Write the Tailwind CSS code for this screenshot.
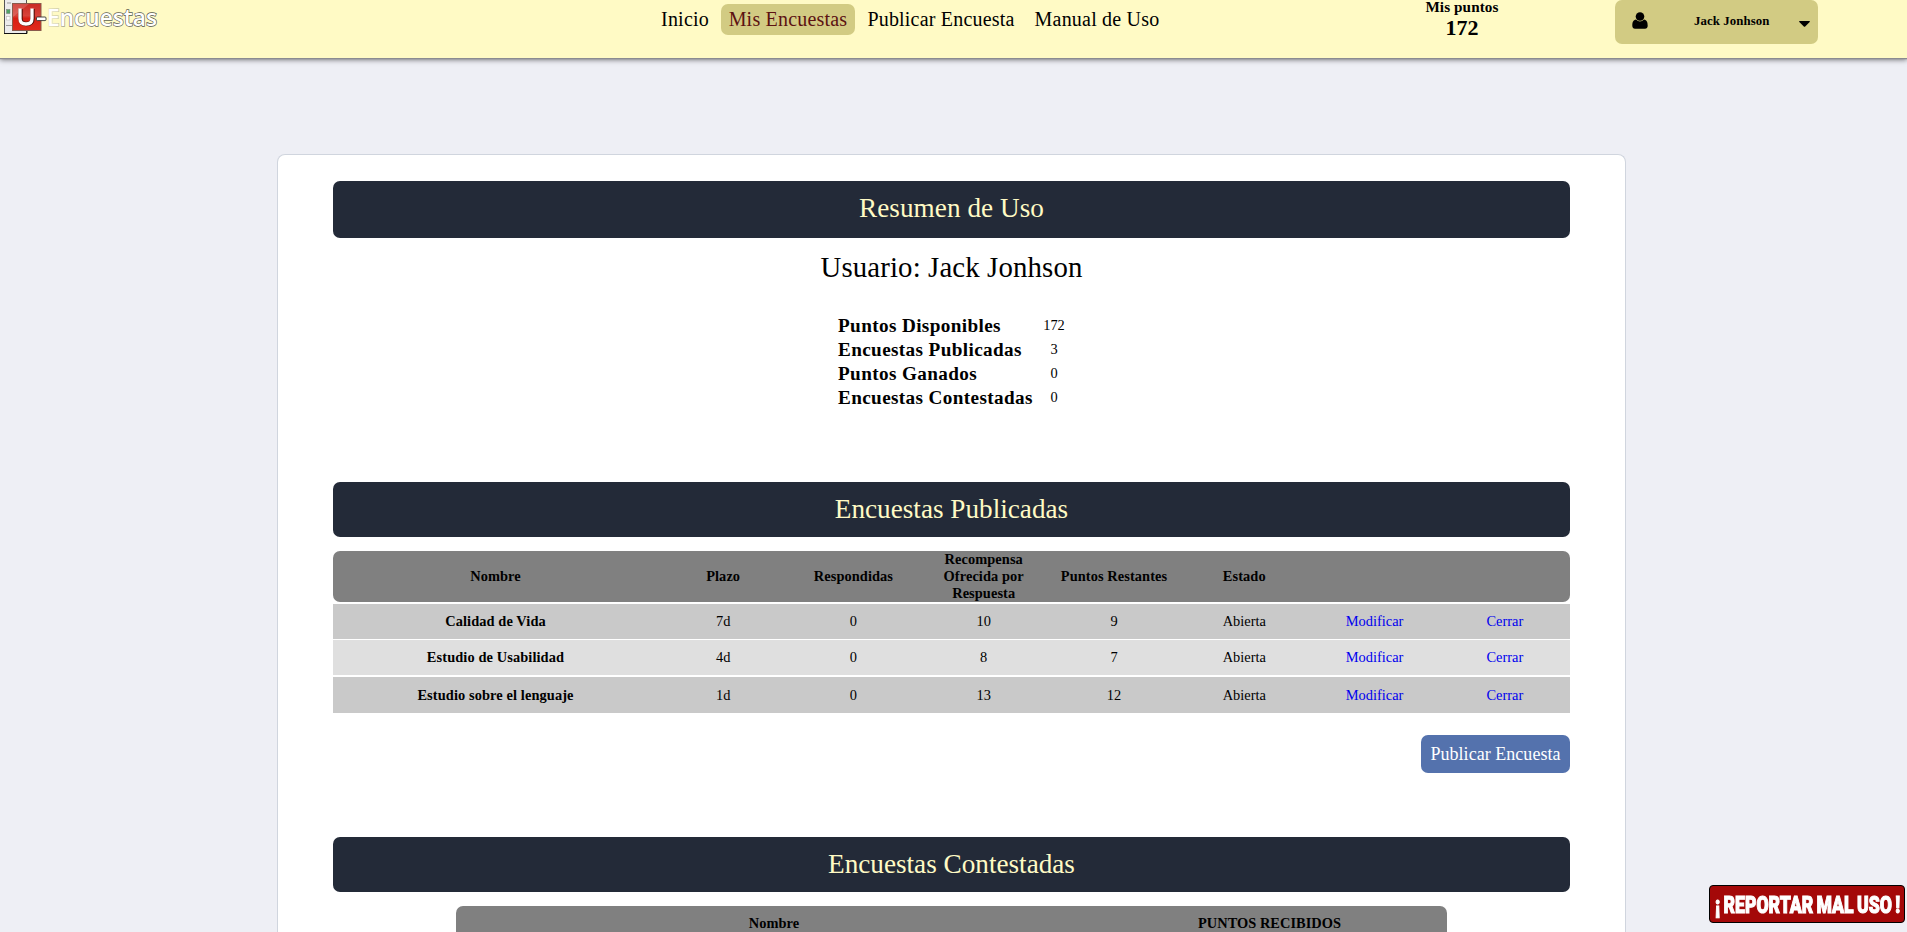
<!DOCTYPE html>
<html lang="es">
<head>
<meta charset="utf-8">
<title>U-Encuestas</title>
<script src="https://cdn.jsdelivr.net/npm/@tailwindcss/browser@4"></script>
</head>
<body class="flex h-screen flex-col overflow-hidden bg-[#eeeff5] font-['Liberation_Serif','Times_New_Roman',serif] text-black">
<header class="flex h-[58px] shrink-0 items-start bg-[#fffac5] shadow-[0_1px_1px_#8b8b90,0_2px_5px_#77777b]">
  <svg class="h-[40px] w-[170px] shrink-0" viewBox="0 0 170 40">
    <defs>
      <linearGradient id="red" x1="0" y1="0" x2="0" y2="1"><stop offset="0" stop-color="#c92a22"/><stop offset=".45" stop-color="#d7433a"/><stop offset=".55" stop-color="#d81f14"/><stop offset="1" stop-color="#e02a1c"/></linearGradient>
      <linearGradient id="edge" x1="0" y1="0" x2="1" y2="0"><stop offset="0" stop-color="#e8e4b8"/><stop offset=".1" stop-color="#d0ccaa"/><stop offset=".2" stop-color="#77776a"/><stop offset="1" stop-color="#4c4c44"/></linearGradient>
    </defs>
    <rect x="4.5" y="-2" width="22" height="35.5" fill="#ececec" stroke="#555"/>
    <path d="M4 33.5H27V30" fill="none" stroke="#111"/>
    <rect x="6.500" y="9.500" width="3.500" height="4" fill="#4fa565" stroke="#777" stroke-width=".5"/>
    <rect x="6.500" y="16.500" width="3.500" height="3.500" fill="#fff" stroke="#bbb" stroke-width=".6"/>
    <path d="M7 3h4M6 25.500h6" stroke="#999"/>
    <rect x="12.500" y="3.500" width="28.500" height="27" fill="url(#red)" stroke="#8a5a4c"/>
    <path d="M13 4H29L13 17Z" fill="#fff" opacity=".16"/>
    <path d="M20.500 9V18.500Q20.500 24 26.500 24T32.500 18.500V9" fill="none" stroke="#4a0d08" stroke-width="4.400"/>
    <path d="M20 8.500V18.500Q20 24 26 24T32 18.500V8.500" fill="none" stroke="#fff" stroke-width="3.300"/>
    <rect x="36.500" y="17" width="9.500" height="3.600" rx="1" fill="#fff" stroke="#333" stroke-width=".9"/>
    <text x="47" y="26" font-family="Open Sans" font-weight="600" font-size="24" textLength="110" lengthAdjust="spacingAndGlyphs" fill="#fff" stroke="url(#edge)" stroke-width="1.300" paint-order="stroke">Encuestas</text>
  </svg>
  <nav class="ml-[484px] flex shrink-0 pt-1 text-center text-[20px] leading-[31px] tracking-[0.2px]">
    <a class="w-[62px]">Inicio</a>
    <a class="ml-[5px] w-[134px] rounded-[7px] bg-[#d2cb83] text-[#5c1212]">Mis Encuestas</a>
    <a class="ml-1.5 w-[160px]">Publicar Encuesta</a>
    <a class="ml-1.5 w-[140px]">Manual de Uso</a>
  </nav>
  <div class="ml-[245px] w-[100px] shrink-0 text-center font-bold">
    <div class="h-[17px] text-[15.2px] leading-[14px] tracking-[0.1px]">Mis puntos</div>
    <div class="text-[22px] leading-[21px]">172</div>
  </div>
  <div class="ml-[103px] flex h-11 w-[203px] shrink-0 items-center rounded-[7px] bg-[#d2cb83] pr-2 pl-[17px]">
    <svg class="-mt-1 h-[17px] w-4" viewBox="0 0 16 17"><circle cx="8" cy="4.500" r="4.300"/><path d="M4 7.600C1.200 8 .3 10.500.3 13.700.3 15.600 1.400 16.700 3 16.700H13C14.600 16.700 15.700 15.600 15.700 13.700 15.700 10.500 14.800 8 12 7.600Q8 11.400 4 7.600Z"/></svg>
    <span class="ml-[46px] text-[12.8px] font-bold tracking-[0.1px]">Jack Jonhson</span>
    <svg class="mt-1 ml-auto h-1.5 w-[11px]" viewBox="0 0 11 6"><path d="M.6 0H10.400Q11.200.3 10.700.9L6.200 5.500Q5.500 6.100 4.800 5.500L.3.900Q-.2.300.6 0Z"/></svg>
  </div>
</header>

<main class="mt-24 ml-[277px] min-h-0 w-[1349px] flex-1 overflow-hidden rounded-t-lg border border-b-0 border-[#d0d5de] bg-white px-[55px] pt-[26px]">
  <h1 class="flex h-[57px] items-center justify-center rounded-[7px] bg-[#232a38] pb-[3px] text-[27.2px] tracking-[0.05px] text-[#fffac5]">Resumen de Uso</h1>
  <p class="mt-[11px] text-center text-[28.8px] leading-9 tracking-[0.13px]">Usuario: Jack Jonhson</p>
  <dl class="mt-[29px] grid grid-cols-[205px_22px] justify-center text-[19.2px] leading-6">
    <dt class="font-bold tracking-[0.37px]">Puntos Disponibles</dt><dd class="text-center text-[14.4px] leading-[23px]">172</dd>
    <dt class="font-bold tracking-[0.37px]">Encuestas Publicadas</dt><dd class="text-center text-[14.4px] leading-[23px]">3</dd>
    <dt class="font-bold tracking-[0.37px]">Puntos Ganados</dt><dd class="text-center text-[14.4px] leading-[23px]">0</dd>
    <dt class="font-bold tracking-[0.37px]">Encuestas Contestadas</dt><dd class="text-center text-[14.4px] leading-[23px]">0</dd>
  </dl>

  <h2 class="mt-[72px] flex h-[55px] items-center justify-center rounded-[7px] bg-[#232a38] pb-px text-[27.2px] text-[#fffac5]">Encuestas Publicadas</h2>
  <div class="mt-3.5 text-center text-[14.4px] leading-[17px]">
    <div class="grid h-[51px] grid-cols-[325px_repeat(7,1fr)] items-center rounded-[7px] bg-[#808080] font-bold tracking-[0.08px]">
      <span>Nombre</span><span>Plazo</span><span>Respondidas</span><span class="px-5">Recompensa Ofrecida por Respuesta</span><span>Puntos Restantes</span><span>Estado</span><span></span><span></span>
    </div>
    <div class="mt-0.5 grid h-[35px] grid-cols-[325px_repeat(7,1fr)] items-center bg-[#c9c9c9]">
      <b class="tracking-[0.1px]">Calidad de Vida</b><span>7d</span><span>0</span><span>10</span><span>9</span><span>Abierta</span><a class="text-[#0000ee]">Modificar</a><a class="text-[#0000ee]">Cerrar</a>
    </div>
    <div class="mt-px grid h-[35px] grid-cols-[325px_repeat(7,1fr)] items-center bg-[#dfdfdf]">
      <b class="tracking-[0.1px]">Estudio de Usabilidad</b><span>4d</span><span>0</span><span>8</span><span>7</span><span>Abierta</span><a class="text-[#0000ee]">Modificar</a><a class="text-[#0000ee]">Cerrar</a>
    </div>
    <div class="mt-0.5 grid h-9 grid-cols-[325px_repeat(7,1fr)] items-center bg-[#c9c9c9]">
      <b class="tracking-[0.1px]">Estudio sobre el lenguaje</b><span>1d</span><span>0</span><span>13</span><span>12</span><span>Abierta</span><a class="text-[#0000ee]">Modificar</a><a class="text-[#0000ee]">Cerrar</a>
    </div>
  </div>
  <button class="mt-[22px] ml-auto block h-[38px] w-[149px] rounded-[7px] bg-[#5472ad] text-[18px] tracking-[0.04px] text-white">Publicar Encuesta</button>

  <h2 class="mt-16 flex h-[55px] items-center justify-center rounded-[7px] bg-[#232a38] pb-px text-[27.2px] text-[#fffac5]">Encuestas Contestadas</h2>
  <div class="mx-auto mt-3.5 grid h-[26px] w-[991px] grid-cols-[636px_355px] rounded-t-[7px] bg-[#808080] pt-[9px] text-center text-[14.4px] leading-[17px] font-bold tracking-[0.04px]">
    <span>Nombre</span><span>PUNTOS RECIBIDOS</span>
  </div>
</main>

<button class="fixed right-0.5 bottom-[9px] h-[38px] w-[196px] rounded border border-black bg-[#a40808]">
  <svg class="block h-9 w-[194px]" viewBox="0 0 194 36"><text class="[word-spacing:-1.5px]" x="5" y="27" font-family="Impact, Roboto" font-weight="900" font-size="24" textLength="185" lengthAdjust="spacingAndGlyphs" fill="#fff" stroke="#fff" stroke-width="1.100">¡ REPORTAR MAL USO !</text></svg>
</button>
</body>
</html>
